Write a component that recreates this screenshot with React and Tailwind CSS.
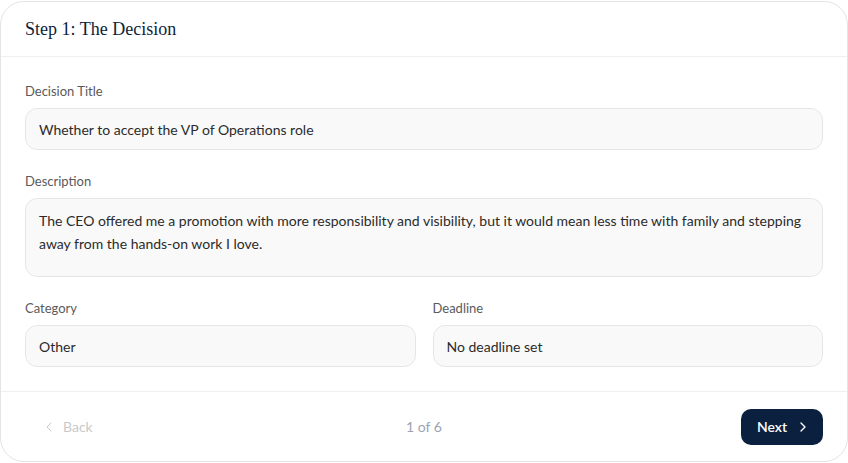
import { ChevronLeft, ChevronRight } from "lucide-react";

const field = "w-full rounded-[12px] border border-[#e6e6e6] bg-[#f9f9f9] px-[13px] text-[14px] text-[#2b2b2b]";

function Label({ children }) {
  return <div className="mb-[7px] text-[13px] leading-5 text-[#5a5a5a]">{children}</div>;
}

export default function App() {
  return (
    <div className="min-h-screen bg-white pt-px font-['Lato','Noto_Sans',sans-serif]">
      <div className="flex h-[461px] flex-col overflow-hidden rounded-[24px] border border-[#e4e4e4] bg-white">
        {/* header */}
        <div className="flex h-[55px] items-center border-b border-[#efefef] px-6">
          <h1 className="font-['Liberation_Serif',Georgia,serif] text-[18px] text-[#0e1e3a]">Step 1: The Decision</h1>
        </div>

        {/* form */}
        <div className="flex flex-col gap-[21px] border-b border-[#efefef] px-6 pb-6 pt-6">
          <div>
            <Label>Decision Title</Label>
            <div className={`${field} flex h-[42px] items-center`}>Whether to accept the VP of Operations role</div>
          </div>
          <div>
            <Label>Description</Label>
            <div className={`${field} h-[79px] pt-[10px] leading-[23px]`}>
              The CEO offered me a promotion with more responsibility and visibility, but it would mean less time with family and stepping away from the hands-on work I love.
            </div>
          </div>
          <div className="grid grid-cols-2 gap-[17px]">
            <div>
              <Label>Category</Label>
              <div className={`${field} flex h-[42px] items-center`}>Other</div>
            </div>
            <div>
              <Label>Deadline</Label>
              <div className={`${field} flex h-[42px] items-center`}>No deadline set</div>
            </div>
          </div>
        </div>

        {/* footer */}
        <div className="grid flex-1 grid-cols-3 items-center px-6">
          <button disabled className="flex items-center gap-[6px] justify-self-start pl-[16px] text-[14px] text-[#c9c9c9]">
            <ChevronLeft size={16} strokeWidth={1.5} />
            Back
          </button>
          <span className="justify-self-center text-[14px] text-[#9ba3b3]">1 of 6</span>
          <button className="flex h-[36px] w-[82px] items-center justify-center gap-[8px] justify-self-end rounded-[10px] bg-[#0b1f3f] pl-[4px] text-[14px] font-semibold text-white">
            Next
            <ChevronRight size={16} strokeWidth={2} />
          </button>
        </div>
      </div>
    </div>
  );
}
